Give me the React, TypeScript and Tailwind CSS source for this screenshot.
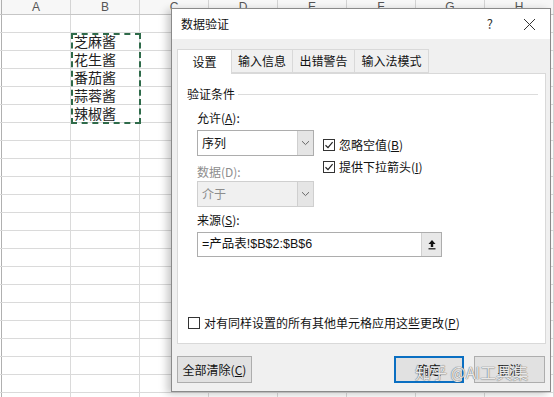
import React from "react";

const cols = ["A", "B", "C", "D", "E", "F", "G", "H"];
const items = ["芝麻酱", "花生酱", "番茄酱", "蒜蓉酱", "辣椒酱"];
const rowCount = 22;

const Check = ({ checked }: { checked: boolean }) => (
  <span className="flex h-[12px] w-[12px] shrink-0 items-center justify-center border border-[#333] bg-white">
    {checked && (
      <svg width="10" height="10" viewBox="0 0 10 10">
        <path d="M1.5 5.2 L4 7.6 L8.6 2.2" fill="none" stroke="#222" strokeWidth="1.2" />
      </svg>
    )}
  </span>
);

const Caret = () => (
  <svg width="9" height="6" viewBox="0 0 9 6">
    <path d="M1 1.2 L4.5 4.6 L8 1.2" fill="none" stroke="#666" strokeWidth="1" />
  </svg>
);

const Combo = ({ value, disabled }: { value: string; disabled?: boolean }) => (
  <div
    className={
      "flex h-[26px] w-[117px] border " +
      (disabled ? "border-[#cfcfcf] bg-[#f0f0f0]" : "border-[#adadad] bg-white")
    }
  >
    <div className={"flex flex-1 items-center pl-[4px] " + (disabled ? "text-[#8d8d8d]" : "text-[#111]")}>
      {value}
    </div>
    <div className="flex w-[16px] items-center justify-center border-l border-[#cfcfcf] bg-[#e5e5e5]">
      <Caret />
    </div>
  </div>
);

export default function App() {
  return (
    <div className="relative h-[397px] w-[554px] overflow-hidden bg-white font-['Noto_Sans_CJK_SC','Noto_Sans',sans-serif]">
      {/* sheet */}
      <div className="flex h-[15px] border-b border-[#c6c6c6] bg-[#f7f7f7]">
        <div className="w-[3px] border-r border-[#b0b0b0]" />
        {cols.map((c) => (
          <div
            key={c}
            className="flex w-[69px] shrink-0 items-center justify-center border-r border-[#d4d4d4] font-['Liberation_Sans',sans-serif] text-[12px] leading-[14px] text-[#555]"
          >
            {c}
          </div>
        ))}
      </div>
      {Array.from({ length: rowCount }).map((_, r) => (
        <div key={r} className="flex h-[18px] border-b border-[#dadada]">
          <div className="w-[3px] border-r border-[#b0b0b0]" />
          {cols.map((c, ci) => (
            <div
              key={c}
              className="flex w-[69px] shrink-0 items-center border-r border-[#dadada] pl-[3px] text-[14px] leading-[17px] text-[#222]"
            >
              {ci === 1 && r >= 1 && r <= 5 ? items[r - 1] : ""}
            </div>
          ))}
        </div>
      ))}
      <div className="absolute left-[71px] top-[33px] h-[91px] w-[70px] border-2 border-dashed border-[#2f6b4a]" />

      {/* dialog */}
      <div className="absolute left-[171px] top-[8px] flex h-[384px] w-[380px] flex-col border border-[#8a8a8a] bg-[#f0f0f0] text-[12px] text-[#111] shadow-[-4px_2px_8px_rgba(0,0,0,0.22)]">
        <div className="flex h-[30px] items-center bg-white pl-[9px] pr-[14px]">
          <span className="flex-1">数据验证</span>
          <span className="mr-[30px] text-[13px] text-[#333]">?</span>
          <svg width="13" height="13" viewBox="0 0 13 13">
            <path d="M1 1 L12 12 M12 1 L1 12" stroke="#333" strokeWidth="1" />
          </svg>
        </div>

        <div className="flex flex-1 flex-col px-[5px] pt-[9px]">
          <div className="flex h-[25px] items-end">
            <div className="relative z-10 -mb-px flex h-[25px] w-[55px] items-center justify-center border border-b-0 border-[#d9d9d9] bg-white">
              设置
            </div>
            <div className="flex h-[24px] w-[61px] items-center justify-center border border-l-0 border-[#d9d9d9]">
              输入信息
            </div>
            <div className="flex h-[24px] w-[62px] items-center justify-center border border-l-0 border-[#d9d9d9]">
              出错警告
            </div>
            <div className="flex h-[24px] w-[74px] items-center justify-center border border-l-0 border-[#d9d9d9]">
              输入法模式
            </div>
          </div>

          <div className="flex h-[271px] w-[369px] flex-col border border-[#d9d9d9] bg-white pl-[9px] pr-[7px] pt-[12px]">
            <div className="flex items-center">
              <span className="leading-[16px]">验证条件</span>
              <div className="ml-[3px] h-px flex-1 bg-[#dcdcdc]" />
            </div>

            <div className="flex pl-[10px]">
              <div className="flex flex-col">
                <div className="mt-[8px] leading-[16px]">
                  允许(<u>A</u>):
                </div>
                <div className="mt-[4px]">
                  <Combo value="序列" />
                </div>
                <div className="mt-[8px] leading-[16px] text-[#8d8d8d]">数据(D):</div>
                <div className="mt-[1px]">
                  <Combo value="介于" disabled />
                </div>
              </div>
              <div className="ml-[9px] flex flex-col pt-[35px]">
                <div className="flex items-center gap-[4px] leading-[16px]">
                  <Check checked />
                  <span>
                    忽略空值(<u>B</u>)
                  </span>
                </div>
                <div className="mt-[6px] flex items-center gap-[4px] leading-[16px]">
                  <Check checked />
                  <span>
                    提供下拉箭头(<u>I</u>)
                  </span>
                </div>
              </div>
            </div>

            <div className="mt-[5px] pl-[10px] leading-[16px]">
              来源(<u>S</u>):
            </div>
            <div className="ml-[10px] mt-[4px] flex h-[25px] w-[245px] border border-[#adadad] bg-white">
              <div className="flex flex-1 items-center pl-[4px] font-['Liberation_Sans','Noto_Sans_CJK_SC',sans-serif] text-[12.5px]">
                =产品表!$B$2:$B$6
              </div>
              <div className="flex w-[20px] items-center justify-center border-l border-[#d0d0d0] bg-[#e8e8e8]">
                <svg width="10" height="11" viewBox="0 0 10 11">
                  <path d="M5 1 L1.5 5 H3.8 V8 H6.2 V5 H8.5 Z" fill="#111" />
                  <path d="M1.5 9.8 H8.5" stroke="#111" strokeWidth="1.2" />
                </svg>
              </div>
            </div>

            <div className="mt-auto mb-[12px] flex items-center gap-[4px] pl-[1px] leading-[16px]">
              <Check checked={false} />
              <span>
                对有同样设置的所有其他单元格应用这些更改(<u>P</u>)
              </span>
            </div>
          </div>

          <div className="mt-[12px] flex items-start">
            <button className="h-[27px] w-[75px] border border-[#adadad] bg-[#e1e1e1] text-[12px]">
              全部清除(<u>C</u>)
            </button>
            <button className="ml-auto h-[27px] w-[70px] border-2 border-[#0a6fc2] bg-[#e1e1e1] text-[12px]">
              确定
            </button>
            <button className="ml-[10px] h-[27px] w-[71px] border border-[#adadad] bg-[#e1e1e1] text-[12px]">
              取消
            </button>
          </div>
        </div>

        <div className="absolute left-[243px] top-[352px] whitespace-nowrap text-[16px] leading-[22px] text-white/85 [text-shadow:0_0_1px_#666,0_0_1px_#666]">
          知乎 @AI工具集
        </div>
      </div>
    </div>
  );
}
